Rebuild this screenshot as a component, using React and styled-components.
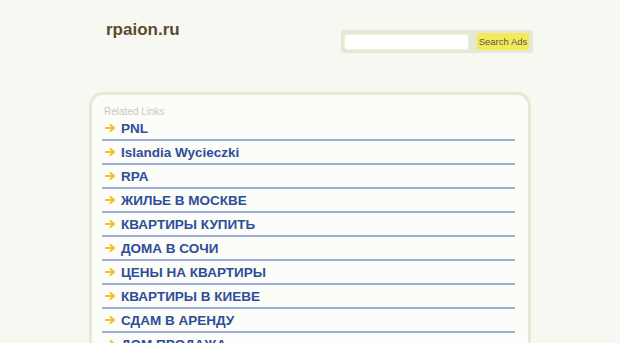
import styled, { createGlobalStyle } from "styled-components";

const Global = createGlobalStyle`
  html, body {
    margin: 0;
    padding: 0;
    background: #f8f8f2;
    font-family: "Liberation Sans", Arial, sans-serif;
  }
`;

const Page = styled.div`
  width: 442px;
  margin: 0 0 0 89px;
`;

const Header = styled.div`
  display: flex;
  justify-content: space-between;
  align-items: flex-start;
  height: 92px;
`;

const Logo = styled.h1`
  margin: 20px 0 0 17px;
  font-size: 17px;
  font-weight: bold;
  color: #5b4a2c;
`;

const SearchBar = styled.form`
  display: flex;
  align-items: center;
  justify-content: space-between;
  margin: 30px -2px 0 0;
  padding: 3px 4px 3px 3px;
  background: #e5e8d4;
  border-radius: 3px;
  width: 185px;
`;

const Input = styled.input`
  width: 123px;
  height: 14px;
  padding: 0;
  border: 1px solid #eef0e2;
  border-radius: 3px;
  background: #fff;
`;

const Button = styled.button`
  height: 17px;
  width: 52px;
  padding: 0;
  border: none;
  border-radius: 3px;
  background: #f4e95a;
  color: #5a5a4a;
  font-family: "Liberation Sans", Arial, sans-serif;
  font-size: 9.5px;
  white-space: nowrap;
`;

const Panel = styled.div`
  border: 3px solid #e7e9d5;
  border-radius: 14px;
  background: #fcfcf8;
  padding: 11px 13px 20px 10px;
`;

const Caption = styled.div`
  font-size: 10px;
  color: #c9c9c0;
  margin-left: 2px;
  height: 11px;
`;

const List = styled.ul`
  list-style: none;
  margin: 0;
  padding: 0;
`;

const Item = styled.li`
  display: flex;
  align-items: center;
  height: 22px;
  border-bottom: 2px solid #9cafdc;
`;

const Arrow = styled.svg`
  width: 12px;
  height: 10px;
  margin: 0 5px 0 2px;
  flex: none;
`;

const Link = styled.a`
  color: #2e4d9b;
  font-size: 13.5px;
  font-weight: bold;
  text-decoration: none;
`;

const links = [
  "PNL",
  "Islandia Wycieczki",
  "RPA",
  "ЖИЛЬЕ В МОСКВЕ",
  "КВАРТИРЫ КУПИТЬ",
  "ДОМА В СОЧИ",
  "ЦЕНЫ НА КВАРТИРЫ",
  "КВАРТИРЫ В КИЕВЕ",
  "СДАМ В АРЕНДУ",
  "ДОМ ПРОДАЖА",
];

export default function App() {
  return (
    <>
      <Global />
      <Page>
        <Header>
          <Logo>rpaion.ru</Logo>
          <SearchBar onSubmit={(e) => e.preventDefault()}>
            <Input type="text" />
            <Button type="submit">Search Ads</Button>
          </SearchBar>
        </Header>
        <Panel>
          <Caption>Related Links</Caption>
          <List>
            {links.map((l) => (
              <Item key={l}>
                <Arrow viewBox="0 0 12 10">
                  <path
                    d="M1 5 H10 M6 1.5 L10 5 L6 8.5"
                    fill="none"
                    stroke="#f2c22a"
                    strokeWidth="2"
                  />
                </Arrow>
                <Link href="#">{l}</Link>
              </Item>
            ))}
          </List>
        </Panel>
      </Page>
    </>
  );
}
